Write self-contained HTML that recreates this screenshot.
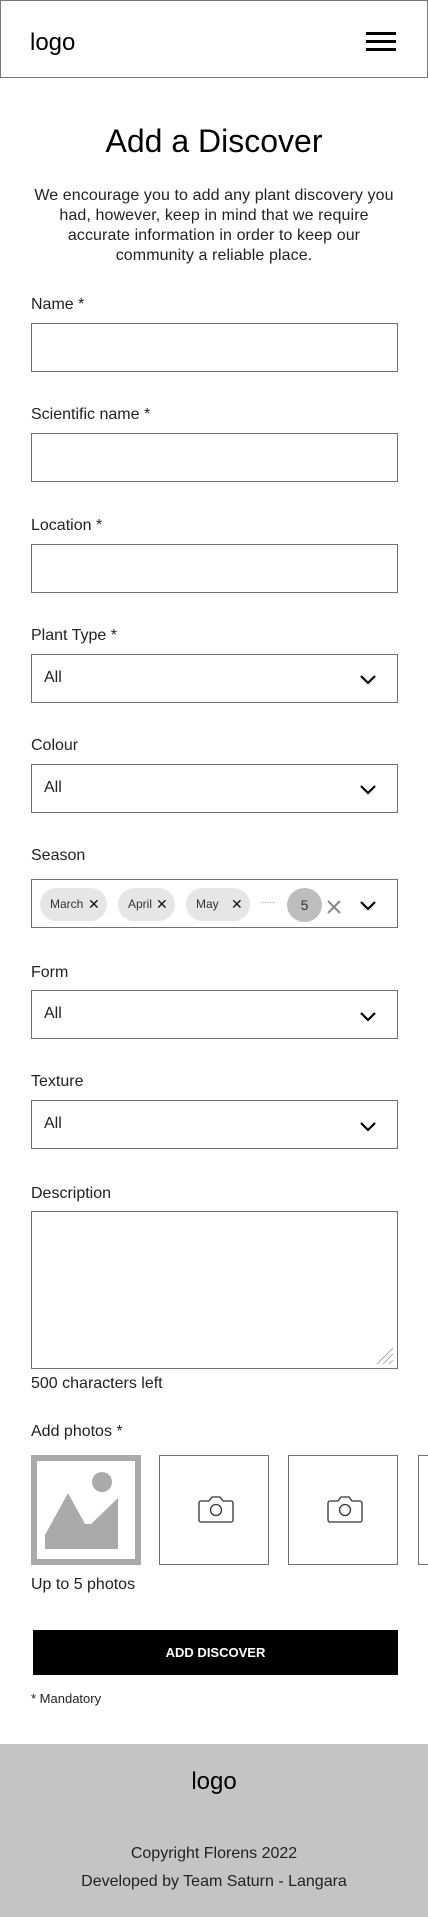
<!DOCTYPE html>
<html><head><meta charset="utf-8"><style>
*{margin:0;padding:0;box-sizing:border-box}
body{width:428px;height:1917px;position:relative;background:#fff;font-family:"Liberation Sans",sans-serif;color:#222;overflow:hidden}
.a{position:absolute}
.lbl{position:absolute;left:31px;font-size:16px;line-height:20px;color:#222}
.box{position:absolute;left:31px;width:367px;height:49px;border:1.5px solid #707070;background:#fff}
.all{position:absolute;left:12px;top:13px;font-size:16px;line-height:20px}
.chev{position:absolute;right:20px;top:19px}
.chip{position:absolute;top:8px;height:33px;border-radius:17px;background:#e6e6e6;font-size:12px;line-height:33px;padding-left:10px;color:#333}
.chip b{font-weight:normal;position:absolute;font-size:14px;color:#111}
.ph{position:absolute;top:1455px;width:110px;height:110px;border:1.5px solid #707070}
</style></head><body>
<div class="a" style="left:0;top:0;width:428px;height:78px;border:1.5px solid #777"></div>
<div class="a" style="left:30px;top:29px;font-size:24px;line-height:28px;color:#000">logo</div>
<div class="a" style="left:366px;top:32px;width:30px;height:3px;background:#000"></div>
<div class="a" style="left:366px;top:40px;width:30px;height:3px;background:#000"></div>
<div class="a" style="left:366px;top:48px;width:30px;height:3px;background:#000"></div>

<div class="a" style="left:0;width:428px;top:121px;text-align:center;font-size:32px;line-height:40px;color:#000">Add a Discover</div>
<div class="a" style="left:0;width:428px;top:186px;text-align:center;font-size:16px;line-height:20px;color:#222;white-space:nowrap;letter-spacing:0.1px">We encourage you to add any plant discovery you<br>had, however, keep in mind that we require<br>accurate information in order to keep our<br>community a reliable place.</div>

<div class="lbl" style="top:295px">Name *</div><div class="box" style="top:323px"></div>
<div class="lbl" style="top:405px">Scientific name *</div><div class="box" style="top:433px"></div>
<div class="lbl" style="top:516px">Location *</div><div class="box" style="top:544px"></div>

<div class="lbl" style="top:626px">Plant Type *</div><div class="box" style="top:654px"><div class="all">All</div><svg class="chev" width="18" height="12" viewBox="0 0 18 12"><path d="M2 2l7 7 7-7" fill="none" stroke="#000" stroke-width="2.2"/></svg></div>
<div class="lbl" style="top:736px">Colour</div><div class="box" style="top:764px"><div class="all">All</div><svg class="chev" width="18" height="12" viewBox="0 0 18 12"><path d="M2 2l7 7 7-7" fill="none" stroke="#000" stroke-width="2.2"/></svg></div>

<div class="lbl" style="top:846px">Season</div>
<div class="box" style="top:879px">
<div class="chip" style="left:8px;width:67px">March<b style="left:48px;top:0">✕</b></div>
<div class="chip" style="left:86px;width:57px">April<b style="left:38px;top:0">✕</b></div>
<div class="chip" style="left:154px;width:64px">May<b style="left:45px;top:0">✕</b></div>
<div class="a" style="left:229px;top:15px;font-size:10px;color:#999">.....</div>
<div class="a" style="left:255px;top:8px;width:35px;height:34px;border-radius:50%;background:#bdbdbd;text-align:center;line-height:34px;font-size:14px;color:#333">5</div>
<svg class="a" style="left:295px;top:20px" width="14" height="14" viewBox="0 0 14 14"><path d="M1 1l12 12M13 1L1 13" stroke="#888" stroke-width="2"/></svg>
<svg class="chev" style="top:20px" width="18" height="12" viewBox="0 0 18 12"><path d="M2 2l7 7 7-7" fill="none" stroke="#000" stroke-width="2.2"/></svg>
</div>

<div class="lbl" style="top:963px">Form</div><div class="box" style="top:990px"><div class="all">All</div><svg class="chev" style="top:20px" width="18" height="12" viewBox="0 0 18 12"><path d="M2 2l7 7 7-7" fill="none" stroke="#000" stroke-width="2.2"/></svg></div>
<div class="lbl" style="top:1072px">Texture</div><div class="box" style="top:1100px"><div class="all">All</div><svg class="chev" style="top:20px" width="18" height="12" viewBox="0 0 18 12"><path d="M2 2l7 7 7-7" fill="none" stroke="#000" stroke-width="2.2"/></svg></div>

<div class="lbl" style="top:1184px">Description</div>
<div class="box" style="top:1211px;height:158px"><svg class="a" style="right:3px;bottom:3px" width="18" height="18" viewBox="0 0 18 18"><path d="M1 17L17 1M7 17L17 7M13 17l4-4" stroke="#999" stroke-width="0.8"/></svg></div>
<div class="lbl" style="top:1374px">500 characters left</div>

<div class="lbl" style="top:1422px">Add photos *</div>
<div class="ph" style="left:31px;border:6px solid #aaa;background:#fff"><svg width="98" height="98" viewBox="0 0 98 98" style="position:absolute;left:0;top:0"><rect x="0" y="0" width="98" height="98" fill="#fff"/><circle cx="65" cy="21" r="10" fill="#aaa"/><path d="M8 74L31 32 48 63H54L81 37V88H8Z" fill="#aaa"/></svg></div>
<div class="ph" style="left:159px"><svg class="a" style="left:38px;top:38px" width="36" height="30" viewBox="0 0 36 30"><path d="M3 7h8l3-4h8l3 4h8a2 2 0 0 1 2 2v17a2 2 0 0 1-2 2H3a2 2 0 0 1-2-2V9a2 2 0 0 1 2-2z" fill="none" stroke="#333" stroke-width="1.3"/><circle cx="18" cy="16" r="5.5" fill="none" stroke="#333" stroke-width="1.3"/></svg></div>
<div class="ph" style="left:288px"><svg class="a" style="left:38px;top:38px" width="36" height="30" viewBox="0 0 36 30"><path d="M3 7h8l3-4h8l3 4h8a2 2 0 0 1 2 2v17a2 2 0 0 1-2 2H3a2 2 0 0 1-2-2V9a2 2 0 0 1 2-2z" fill="none" stroke="#333" stroke-width="1.3"/><circle cx="18" cy="16" r="5.5" fill="none" stroke="#333" stroke-width="1.3"/></svg></div>
<div class="ph" style="left:418px"></div>
<div class="lbl" style="top:1575px">Up to 5 photos</div>

<div class="a" style="left:33px;top:1630px;width:365px;height:45px;background:#000;color:#fff;font-weight:bold;font-size:13px;line-height:45px;text-align:center">ADD DISCOVER</div>
<div class="a" style="left:31px;top:1691px;font-size:13px;line-height:16px">* Mandatory</div>

<div class="a" style="left:0;top:1744px;width:428px;height:173px;background:#c4c4c4"></div>
<div class="a" style="left:0;width:428px;top:1767px;text-align:center;font-size:24px;line-height:30px;color:#000">logo</div>
<div class="a" style="left:0;width:428px;top:1844px;text-align:center;font-size:16px;line-height:20px">Copyright Florens 2022</div>
<div class="a" style="left:0;width:428px;top:1872px;text-align:center;font-size:16px;line-height:20px">Developed by Team Saturn - Langara</div>
</body></html>
